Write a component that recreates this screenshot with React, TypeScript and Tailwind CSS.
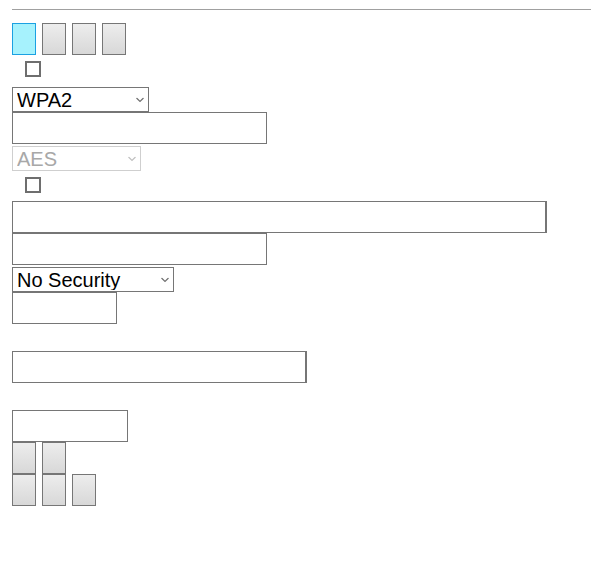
import React from 'react';

const btn =
  'block w-6 h-8 border border-[#767676] bg-gradient-to-b from-[#ededed] to-[#d8d8d8]';
const input = 'block h-8 border border-[#767676] bg-white';

function Chevron({ color }: { color: string }) {
  return (
    <svg
      className="pointer-events-none absolute right-[5px] top-1/2 -translate-y-1/2"
      width="8"
      height="5"
      viewBox="0 0 8 5"
      fill="none"
    >
      <path d="M0.5 0.5 L4 4 L7.5 0.5" stroke={color} strokeWidth="1.2" />
    </svg>
  );
}

function Select({
  value,
  width,
  height = 'h-[25px]',
  disabled,
  className = '',
}: {
  value: string;
  width: string;
  height?: string;
  disabled?: boolean;
  className?: string;
}) {
  return (
    <div className={`relative ${width} ${height} ${className}`}>
      <select
        disabled={disabled}
        defaultValue={value}
        className={`block h-full w-full appearance-none border bg-white pl-[4px] text-[20px] leading-none ${
          disabled ? 'border-[#cfcfcf] text-[#a8a8a8]' : 'border-[#767676] text-black'
        }`}
      >
        <option>{value}</option>
      </select>
      <Chevron color={disabled ? '#c0c0c0' : '#707070'} />
    </div>
  );
}

export default function App() {
  return (
    <div className="min-h-[583px] bg-white pl-3 pt-[9px] font-['Liberation_Sans',Arial,sans-serif]">
      <div className="h-px bg-[#a0a0a0]" />

      {/* mode buttons */}
      <div className="mt-[13px] flex gap-[6px]">
        <button className="block h-8 w-6 border border-[#1ba1e2] bg-[#a6f2fd]" />
        <button className={btn} />
        <button className={btn} />
        <button className={btn} />
      </div>

      <div className="ml-[13px] mt-[6px] h-4 w-4 border-2 border-[#6e6e6e]" />

      <Select value="WPA2" width="w-[137px]" className="mt-[10px]" />
      <input className={`${input} w-[255px]`} />

      <Select value="AES" width="w-[129px]" disabled className="mt-[2px]" />

      <div className="ml-[13px] mt-[6px] h-4 w-4 border-2 border-[#6e6e6e]" />

      <input className={`${input} mt-2 w-[535px] border-r-2`} />
      <input className={`${input} w-[255px]`} />
      <Select value="No Security" width="w-[162px]" className="mt-[2px]" />
      <input className={`${input} w-[105px]`} />

      <input className={`${input} mt-[27px] w-[295px] border-r-2`} />

      <input className={`${input} mt-[27px] w-[116px]`} />

      <div className="grid w-[90px] grid-cols-[24px_24px_24px] gap-x-[6px]">
        <button className={btn} />
        <button className={btn} />
        <div />
        <button className={btn} />
        <button className={btn} />
        <button className={btn} />
      </div>
    </div>
  );
}
